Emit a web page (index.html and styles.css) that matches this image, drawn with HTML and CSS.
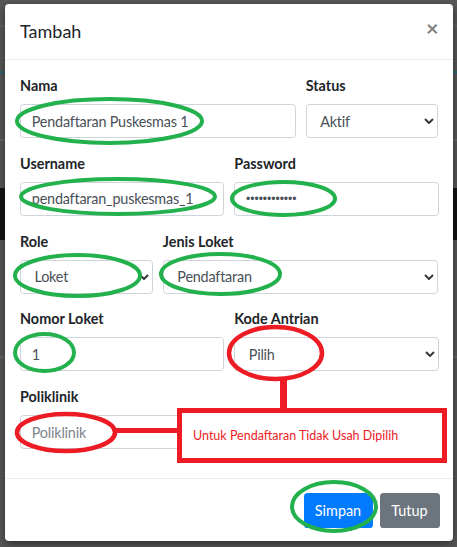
FILE: index.html
```html
<!DOCTYPE html>
<html lang="id">
<head>
<meta charset="utf-8">
<title>Tambah</title>
<link rel="stylesheet" href="styles.css">
</head>
<body>
<div class="modal">
  <div class="modal-header">
    <h5 class="modal-title">Tambah</h5>
    <button class="close" type="button">&times;</button>
  </div>
  <div class="modal-body">
    <div class="row">
      <div class="col col-8"><label>Nama</label><input class="control" type="text" value="Pendaftaran Puskesmas 1"></div>
      <div class="col col-4"><label>Status</label><select class="control select"><option>Aktif</option></select></div>
    </div>
    <div class="row">
      <div class="col col-6"><label>Username</label><input class="control" type="text" value="pendaftaran_puskesmas_1"></div>
      <div class="col col-6"><label>Password</label><input class="control pass" type="password" value="abcdefghijkl"></div>
    </div>
    <div class="row">
      <div class="col col-4"><label>Role</label><select class="control select"><option>Loket</option></select></div>
      <div class="col col-8"><label>Jenis Loket</label><select class="control select"><option>Pendaftaran</option></select></div>
    </div>
    <div class="row">
      <div class="col col-6"><label>Nomor Loket</label><input class="control" type="text" value="1"></div>
      <div class="col col-6"><label>Kode Antrian</label><select class="control select"><option>Pilih</option></select></div>
    </div>
    <div class="row">
      <div class="col col-12"><label>Poliklinik</label><input class="control" type="text" placeholder="Poliklinik"></div>
    </div>
  </div>
  <div class="modal-footer">
    <button class="btn btn-primary" type="button">Simpan</button>
    <button class="btn btn-secondary" type="button">Tutup</button>
  </div>
</div>

<svg class="marks" width="457" height="547" viewBox="0 0 457 547" xmlns="http://www.w3.org/2000/svg">
  <g fill="none" stroke="#22b14c" stroke-width="4">
    <ellipse cx="109.5" cy="121" rx="92.5" ry="22"/>
    <ellipse cx="118" cy="196.5" rx="97" ry="17.5"/>
    <ellipse cx="283.5" cy="198.5" rx="51.5" ry="16.5"/>
    <ellipse cx="77.5" cy="275.5" rx="62.5" ry="20.5"/>
    <ellipse cx="220.5" cy="274" rx="59.5" ry="20"/>
    <ellipse cx="44.5" cy="352.5" rx="29.5" ry="18.5"/>
    <ellipse cx="334" cy="506.5" rx="42" ry="24.5"/>
  </g>
  <g fill="none" stroke="#ed1c24" stroke-width="4.5">
    <ellipse cx="275.5" cy="353" rx="46.5" ry="26"/>
    <ellipse cx="66" cy="432.5" rx="49" ry="18.5"/>
  </g>
  <g fill="#ed1c24">
    <rect x="280" y="378" width="7" height="32"/>
    <rect x="115" y="428" width="64" height="5"/>
  </g>
</svg>
<div class="note">Untuk Pendaftaran Tidak Usah Dipilih</div>
</body>
</html>
```

FILE: styles.css
```css
* {
  box-sizing: border-box;
}

body {
  margin: 0;
  width: 457px;
  height: 547px;
  padding: 4px 0 0 5px;
  position: relative;
  overflow: hidden;
  font-family: Lato, "Liberation Sans", sans-serif;
  color: #212529;
  background: linear-gradient(to bottom,
    #595959 0 25px, #636363 25px 27px, #595959 27px 71px,
    #2f6468 71px 74px, #595959 74px 139px, #666666 139px 141px,
    #595959 141px 188px, #141414 188px 240px, #595959 240px 356px,
    #666666 356px 358px, #595959 358px);
}

.modal {
  width: 448px;
  background: #fff;
  border-radius: 4px;
  box-shadow: 0 3px 10px rgba(0, 0, 0, 0.5);
}

.modal-header {
  height: 56px;
  display: flex;
  align-items: center;
  justify-content: space-between;
  padding: 0 14.5px 0 15px;
  border-bottom: 1px solid #e9ecef;
}

.modal-title {
  margin: 0;
  font-size: 18px;
  font-weight: 400;
  line-height: 27px;
  color: #212529;
}

.close {
  background: none;
  border: 0;
  padding: 0;
  margin-top: -6px;
  font-family: inherit;
  font-size: 21.6px;
  font-weight: 700;
  line-height: 1;
  color: #000;
  opacity: 0.5;
}

.modal-body {
  padding: 15px 14.5px 14px 15px;
}

.row {
  display: flex;
  margin: 0 -5px;
}

.col {
  display: flex;
  flex-direction: column;
  padding: 0 5px;
  margin-bottom: 14.75px;
}

.col-4 { width: 33.333%; }
.col-6 { width: 50%; }
.col-8 { width: 66.667%; }
.col-12 { width: 100%; }

label {
  font-size: 14.4px;
  font-weight: 700;
  line-height: 22px;
  margin-bottom: 7px;
  color: #212529;
}

.control {
  width: 100%;
  height: 34px;
  padding: 0 10.8px;
  font-family: inherit;
  font-size: 14.4px;
  letter-spacing: -0.2px;
  color: #495057;
  background-color: #fff;
  border: 1px solid #ced4da;
  border-radius: 3.6px;
  outline: none;
}

.control::placeholder {
  color: #7d848b;
}

.pass {
  font-family: "Liberation Sans", sans-serif;
  font-size: 12px;
  letter-spacing: 0;
}

.select {
  appearance: none;
  -webkit-appearance: none;
  padding-left: 13.5px;
  background-image: url("data:image/svg+xml,%3csvg xmlns='http://www.w3.org/2000/svg' width='10' height='6' viewBox='0 0 10 6'%3e%3cpath d='M1 1l4 4 4-4' fill='none' stroke='%23333' stroke-width='1.9'/%3e%3c/svg%3e");
  background-repeat: no-repeat;
  background-position: right 3px center;
  background-size: 10px 6px;
}

.modal-footer {
  display: flex;
  justify-content: flex-end;
  gap: 7px;
  padding: 14px 13.5px 13px;
  border-top: 1px solid #e9ecef;
}

.btn {
  height: 35px;
  padding: 0;
  border: 0;
  border-radius: 3.6px;
  font-family: inherit;
  font-size: 14.4px;
  color: #fff;
}

.btn-primary {
  width: 69px;
  background: #007bff;
}

.btn-secondary {
  width: 60px;
  background: #6c757d;
}

.marks {
  position: absolute;
  left: 0;
  top: 0;
}

.note {
  position: absolute;
  left: 177px;
  top: 408px;
  width: 270px;
  height: 55px;
  display: flex;
  align-items: center;
  padding: 0 0 1px 11px;
  background: #fff;
  border: 5px solid #ed1c24;
  color: #ed1c24;
  font-size: 12.5px;
}
```
